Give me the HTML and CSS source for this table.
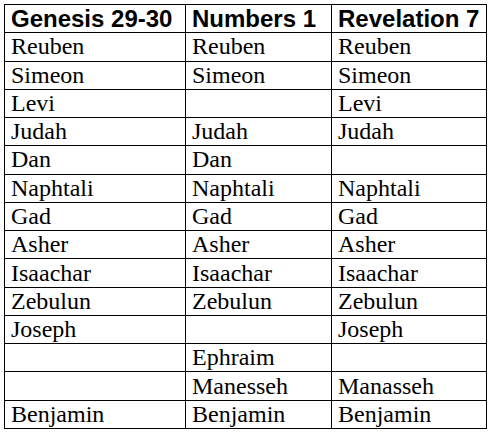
FILE: index.html
```html
<!DOCTYPE html>
<html>
<head>
<meta charset="utf-8">
<link rel="stylesheet" href="styles.css">
</head>
<body>
<table class="tribes">
  <colgroup>
    <col class="c1"><col class="c2"><col class="c3">
  </colgroup>
  <thead>
    <tr><th>Genesis 29-30</th><th>Numbers 1</th><th>Revelation 7</th></tr>
  </thead>
  <tbody>
    <tr><td>Reuben</td><td>Reuben</td><td>Reuben</td></tr>
    <tr><td>Simeon</td><td>Simeon</td><td>Simeon</td></tr>
    <tr><td>Levi</td><td></td><td>Levi</td></tr>
    <tr><td>Judah</td><td>Judah</td><td>Judah</td></tr>
    <tr><td>Dan</td><td>Dan</td><td></td></tr>
    <tr><td>Naphtali</td><td>Naphtali</td><td>Naphtali</td></tr>
    <tr><td>Gad</td><td>Gad</td><td>Gad</td></tr>
    <tr><td>Asher</td><td>Asher</td><td>Asher</td></tr>
    <tr><td>Isaachar</td><td>Isaachar</td><td>Isaachar</td></tr>
    <tr><td>Zebulun</td><td>Zebulun</td><td>Zebulun</td></tr>
    <tr><td>Joseph</td><td></td><td>Joseph</td></tr>
    <tr><td></td><td>Ephraim</td><td></td></tr>
    <tr><td></td><td>Manesseh</td><td>Manasseh</td></tr>
    <tr><td>Benjamin</td><td>Benjamin</td><td>Benjamin</td></tr>
  </tbody>
</table>
</body>
</html>
```
FILE: styles.css
```css
html, body {
  margin: 0;
  padding: 0;
  background: #fff;
}
body {
  padding: 4px 0 0 4px;
}
.tribes {
  border-collapse: collapse;
  table-layout: fixed;
  width: 482px;
  color: #000;
}
.tribes th, .tribes td {
  border: 1px solid #000;
  padding: 0 6px;
  height: 27.27px;
  text-align: left;
  vertical-align: middle;
  white-space: nowrap;
  overflow: hidden;
}
.tribes th {
  font-family: "Liberation Sans", Arial, sans-serif;
  font-weight: bold;
  font-size: 24px;
  line-height: 27px;
}
.tribes td {
  font-family: "Liberation Serif", "Times New Roman", "DejaVu Serif", serif;
  font-size: 24px;
  line-height: 27px;
}
.c1 { width: 181px; }
.c2 { width: 146px; }
.c3 { width: 155px; }
```
